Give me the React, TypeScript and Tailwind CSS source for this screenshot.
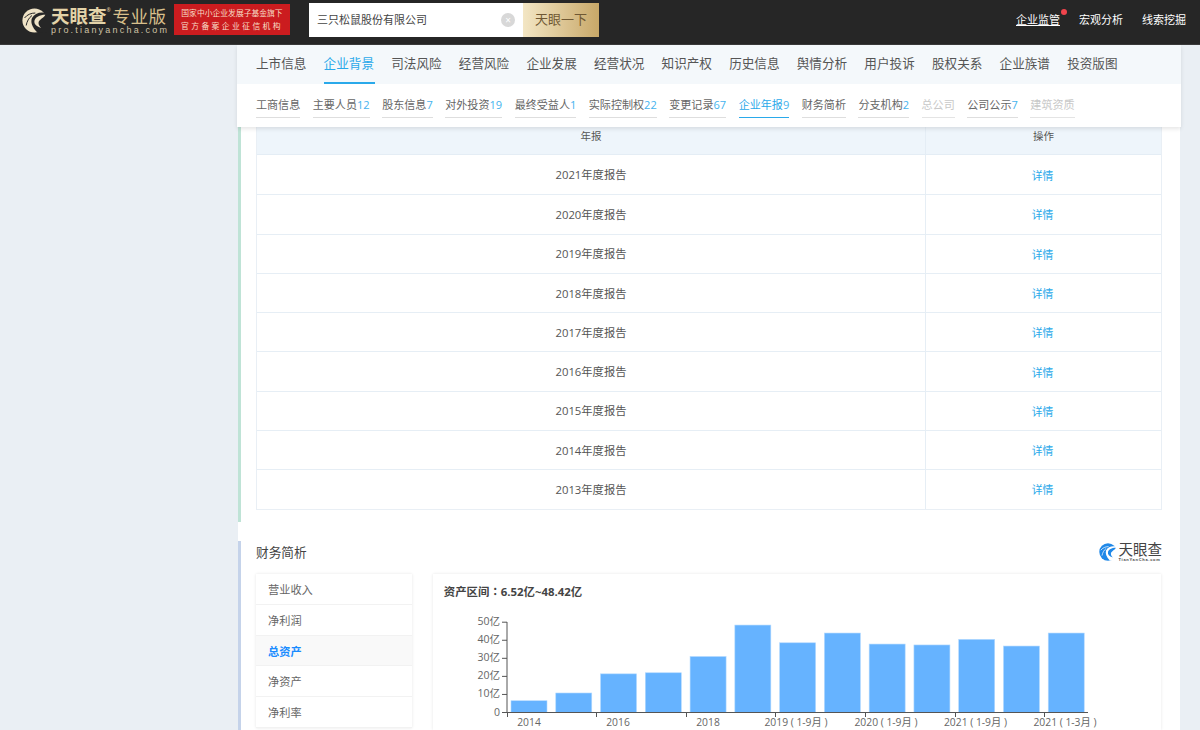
const font = "font-['Open_Sans','Noto_Sans_CJK_SC',sans-serif]";

const tabs = ["上市信息", "企业背景", "司法风险", "经营风险", "企业发展", "经营状况", "知识产权", "历史信息", "舆情分析", "用户投诉", "股权关系", "企业族谱", "投资版图"];

const subTabs: { label: string; count?: number; active?: boolean; off?: boolean }[] = [
  { label: "工商信息" },
  { label: "主要人员", count: 12 },
  { label: "股东信息", count: 7 },
  { label: "对外投资", count: 19 },
  { label: "最终受益人", count: 1 },
  { label: "实际控制权", count: 22 },
  { label: "变更记录", count: 67 },
  { label: "企业年报", count: 9, active: true },
  { label: "财务简析" },
  { label: "分支机构", count: 2 },
  { label: "总公司", off: true },
  { label: "公司公示", count: 7 },
  { label: "建筑资质", off: true },
];

const years = [2021, 2020, 2019, 2018, 2017, 2016, 2015, 2014, 2013];
const sideItems = ["营业收入", "净利润", "总资产", "净资产", "净利率"];

// 图表数据：单位亿
const bars = [6.52, 10.8, 21.4, 22, 31, 48.42, 38.6, 44, 37.9, 37.4, 40.5, 36.8, 44];
const xLabels: [number, string][] = [
  [529, "2014"], [618, "2016"], [708, "2018"], [796, "2019 ( 1-9月 )"], [886, "2020 ( 1-9月 )"], [975.5, "2021 ( 1-9月 )"], [1065, "2021 ( 1-3月 )"],
];

function Swirl({ color, cut, size }: { color: string; cut: string; size: number }) {
  return (
    <svg width={size} height={size} viewBox="0 0 30 30" className="shrink-0">
      <circle cx="15" cy="15" r="14.5" fill={color} />
      <path d="M30 6 C22 4 15 6 12 12 C10 17 12 23 18 29 L30 30 Z" fill={cut} />
      <path d="M28 8 C21 8 16 11 15 15 C14 19 17 22 23 24 C19 20 19 16 22 14 C24 12 27 11 28 8 Z" fill={color} />
      <path d="M3 12 C6 8 11 6 16 6" stroke={cut} strokeWidth="1.2" fill="none" />
      <path d="M5 21 C6 16 8 12 12 9" stroke={cut} strokeWidth="1.2" fill="none" />
    </svg>
  );
}

function Header() {
  return (
    <header className="h-[45px] bg-[#262626] border-b border-[#3a3a3a] flex items-start shrink-0">
      <div className="ml-[22px] mt-[8px]">
        <Swirl color="#efe3c6" cut="#262626" size={25} />
      </div>
      <div className="ml-[4px] mt-[6px] w-[118px] text-[#e3d3a8]">
        <div className="flex items-start h-[20px] leading-[20px]">
          <span className="text-[18.5px] font-bold">天眼查</span>
          <span className="text-[5px] leading-[7px] mt-[1px] w-[6px]">®</span>
          <span className="text-[17.5px] tracking-[0.5px] text-[#d9c08c]">专业版</span>
        </div>
        <div className="text-[9px] leading-[9px] tracking-[2.2px] text-[#cfc3a5] font-['Liberation_Sans',sans-serif] whitespace-nowrap">pro.tianyancha.com</div>
      </div>
      <div className="ml-[5px] mt-[4px] w-[116px] h-[31px] bg-[#cb1c1f] text-[#f7dcc6] flex flex-col justify-center items-center text-[7.8px] leading-[12.3px]">
        <div>国家中小企业发展子基金旗下</div>
        <div className="tracking-[2.4px]">官方备案企业征信机构</div>
      </div>
      <div className="ml-[19px] mt-[3px] w-[214px] h-[34px] bg-white flex items-center pl-[8px] pr-[8px]">
        <span className="flex-1 text-[11px] text-[#444]">三只松鼠股份有限公司</span>
        <span className="w-[14px] h-[14px] rounded-full bg-[#d8d8d8] text-white flex items-center justify-center text-[10px] leading-none">×</span>
      </div>
      <button className="mt-[3px] w-[76px] h-[34px] bg-gradient-to-r from-[#f3e6c4] to-[#c8a868] text-[#6f5833] text-[13px]">天眼一下</button>
      <nav className="ml-auto mr-[14px] mt-[12px] flex gap-[19px] text-[11px] leading-[16px] text-white">
        <a className="relative border-b border-white w-[44px] h-[14px] whitespace-nowrap">
          企业监管
          <span className="absolute -right-[7px] -top-[3px] w-[6px] h-[6px] rounded-full bg-[#f0444c]" />
        </a>
        <a>宏观分析</a>
        <a>线索挖掘</a>
      </nav>
    </header>
  );
}

function Nav() {
  return (
    <div className="ml-[-1px] w-[944px] bg-white shadow-[0_2px_4px_rgba(0,0,0,0.1)] relative z-10">
      <div className="h-[39px] bg-[#f4f8fb] flex pl-[19px] gap-[16.6px]">
        {tabs.map((t) => (
          <div
            key={t}
            className={`w-[51px] h-[39px] text-[12.6px] pt-[10px] leading-[18px] whitespace-nowrap ${t === "企业背景" ? "text-[#2aa9ea] border-b-2 border-[#2aa9ea]" : "text-[#555]"}`}
          >
            {t}
          </div>
        ))}
      </div>
      <div className="h-[43px] flex pl-[19px] pt-[12px] gap-[12.5px]">
        {subTabs.map((s) => (
          <div
            key={s.label}
            className={`h-[22px] text-[11.07px] leading-[18px] whitespace-nowrap border-b ${s.active ? "text-[#2aa9ea] border-[#2aa9ea]" : s.off ? "text-[#c8c8c8] border-[#e4e4e4]" : "text-[#666] border-[#dedede]"}`}
          >
            {s.label}
            {s.count !== undefined && <span className="text-[#45b3ee]">{s.count}</span>}
          </div>
        ))}
      </div>
    </div>
  );
}

function ReportTable() {
  return (
    <section className="h-[395px] border-l-[3px] border-[#bfe3d6] pl-[15px] pr-[18px]">
      <div className="border-x border-b border-[#e9eff5]">
        <div className="flex h-[28px] bg-[#eef5fb] border-b border-[#e4edf5] text-[10.5px] text-[#555] leading-[18px]">
          <div className="flex-1 text-center border-r border-[#e4edf5]">年报</div>
          <div className="w-[235px] text-center">操作</div>
        </div>
        {years.map((y, i) => (
          <div key={y} className={`flex h-[39.3px] items-center ${i ? "border-t border-[#e6eef5]" : ""}`}>
            <div className="flex-1 h-full flex items-center justify-center border-r border-[#e6eef5] pt-[2px] text-[11.3px] text-[#555]">
              {y}年度报告
            </div>
            <div className="w-[235px] pt-[2px] pr-[2px] text-center text-[10.8px] text-[#2aa9ea]">详情</div>
          </div>
        ))}
      </div>
    </section>
  );
}

function Chart() {
  const x0 = 507;
  const y0 = 711.5;
  const scale = 1.806;
  return (
    <svg width="728" height="155" viewBox="433 574 728 155" className="block">
      {[0, 10, 20, 30, 40, 50].map((v) => (
        <g key={v}>
          <line x1={x0 - 5} x2={x0} y1={y0 - v * scale} y2={y0 - v * scale} stroke="#555" />
          <text x={x0 - 7} y={y0 - v * scale + 3} textAnchor="end" fontSize="10.5" fill="#666">
            {v === 0 ? "0" : `${v}亿`}
          </text>
        </g>
      ))}
      {bars.map((b, i) => (
        <rect key={i} x={511 + i * 44.77} y={y0 - b * scale} width={36} height={b * scale} fill="#66b3ff" stroke="#b3d9ff" strokeWidth="0.6" />
      ))}
      <line x1={x0} x2={x0} y1={621} y2={712} stroke="#555" />
      <line x1={x0} x2={1088} y1={711.5} y2={711.5} stroke="#555" />
      {[507, 596, 686, 775, 865, 955, 1044].map((x) => (
        <line key={x} x1={x + 0.5} x2={x + 0.5} y1={712} y2={716} stroke="#555" />
      ))}
      {xLabels.map(([x, t]) => (
        <text key={t} x={x} y={725} textAnchor="middle" fontSize="10.3" fill="#666">
          {t}
        </text>
      ))}
    </svg>
  );
}

function Finance() {
  return (
    <section className="mt-[19px] border-l-[3px] border-[#c5d3ea] pl-[15px] pr-[19px] h-[300px]">
      <div className="flex justify-between items-start h-[33px]">
        <h2 className="text-[12.7px] leading-[22px] text-[#444]">财务简析</h2>
        <div className="flex items-start mt-[2px] mr-[-1px]">
          <Swirl color="#1f88e8" cut="#ffffff" size={18} />
          <div className="ml-[2px] text-[#444]">
            <div className="text-[14.5px] leading-[14px]">天眼查</div>
            <div className="text-[4px] leading-[5px] tracking-[0.7px] font-bold font-['Liberation_Sans',sans-serif]">TianYanCha.com</div>
          </div>
        </div>
      </div>
      <div className="flex gap-[21px] items-start">
        <ul className="w-[156px] bg-white shadow-[0_0_3px_rgba(0,0,0,0.1)] text-[11.2px] text-[#666]">
          {sideItems.map((s) => (
            <li
              key={s}
              className={`h-[30.8px] pl-[12px] leading-[32px] border-b border-[#f2f2f2] ${s === "总资产" ? "bg-[#f9f9f9] text-[#1a8cff] font-bold" : ""}`}
            >
              {s}
            </li>
          ))}
        </ul>
        <div className="w-[729px] bg-white shadow-[0_0_3px_rgba(0,0,0,0.1)]">
          <div className="pl-[11px] pt-[9px] text-[11.4px] leading-[16px] font-bold text-[#444]">
            资产区间<span className="font-['Noto_Sans_CJK_TC',sans-serif]">：</span>6.52亿~48.42亿
          </div>
          <div className="mt-[-25px]">
            <Chart />
          </div>
        </div>
      </div>
    </section>
  );
}

export default function App() {
  return (
    <div className={`${font} h-[730px] overflow-hidden bg-[#eaeff4] flex flex-col`}>
      <Header />
      <main className="ml-[238px] w-[942px] bg-white">
        <Nav />
        <ReportTable />
        <Finance />
      </main>
    </div>
  );
}
